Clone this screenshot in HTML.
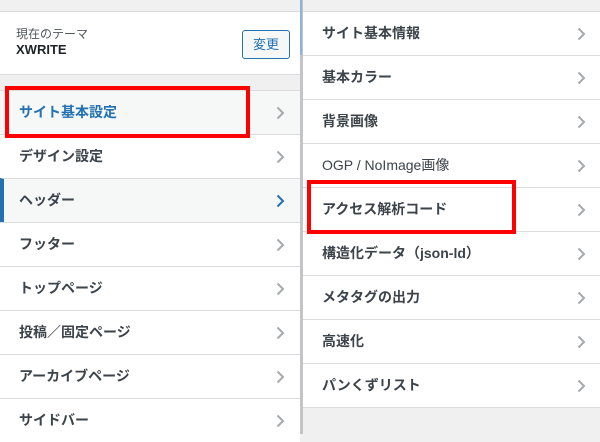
<!DOCTYPE html>
<html><head><meta charset="utf-8"><style>
*{margin:0;padding:0;box-sizing:border-box}
body{width:600px;height:434px;overflow:hidden;background:#f0f0f1;position:relative;font-family:"Liberation Sans","Noto Sans CJK JP",sans-serif;color:#3c434a}
.p{position:absolute;top:0;height:434px;background:#f0f0f1}
.item{position:absolute;height:44px;background:#fff;border-top:1px solid #dcdcde;font-size:14px;font-weight:bold;line-height:43px}
.item svg{position:absolute;top:15px}
.red{position:absolute;border:4px solid #f00}
</style></head><body>
<div class="p" style="left:0;width:300px">
 <div style="position:absolute;top:11px;left:0;width:300px;height:64px;background:#fff;border-top:1px solid #dcdcde;border-bottom:1px solid #dcdcde">
  <div style="position:absolute;left:16px;top:13px;font-size:12px;font-weight:normal;color:#50575e">現在のテーマ</div>
  <div style="position:absolute;left:16px;top:30px;font-size:13px;font-weight:bold;color:#1d2327">XWRITE</div>
  <div style="position:absolute;left:242px;top:18px;width:48px;height:29px;border:1px solid #2271b1;border-radius:3px;background:#f6f7f7;color:#2271b1;font-size:13px;text-align:center;line-height:27px">変更</div>
 </div>
</div>
<div style="position:absolute;left:300px;top:0;width:3px;height:434px;background:#c3c4c7"></div>
<div style="position:absolute;left:300px;top:0;width:2px;height:55px;background:#8ab4d9"></div>
<div id="L"></div><div id="R"></div>
<script>
var L=["サイト基本設定","デザイン設定","ヘッダー","フッター","トップページ","投稿／固定ページ","アーカイブページ","サイドバー"];
var h="";
L.forEach(function(t,i){var top=90+i*44;var act=i==2,hi=i==0;
var bg=(act||hi)?"#f6f7f7":"#fff";var c=hi?"#2271b1":"#3c434a";
var ch=act?"#2271b1":"#a7aaad";
h+='<div class="item" style="left:0;width:300px;top:'+top+'px;background:'+bg+';color:'+c+';padding-left:19px;'+(act?'border-left:4px solid #2271b1;padding-left:15px;':'')+'">'+t+'<svg style="left:'+(act?272:276)+'px" width="9" height="14" viewBox="0 0 9 14"><path d="M1.5 1.5L7 7l-5.5 5.5" fill="none" stroke="'+ch+'" stroke-width="2"/></svg></div>';});
h+='<div class="red" style="left:5px;top:86px;width:245px;height:52px"></div>';
document.getElementById("L").innerHTML=h;
var R=["サイト基本情報","基本カラー","背景画像","OGP / NoImage画像","アクセス解析コード","構造化データ（json-ld）","メタタグの出力","高速化","パンくずリスト"];
h="";
R.forEach(function(t,i){var top=11+i*44;
h+='<div class="item" style="left:303px;width:297px;top:'+top+'px;padding-left:19px;'+(i==8?'border-bottom:1px solid #dcdcde;height:45px;':'')+(i==3?'font-weight:normal;':'')+'">'+t+'<svg style="left:274px" width="9" height="14" viewBox="0 0 9 14"><path d="M1.5 1.5L7 7l-5.5 5.5" fill="none" stroke="#a7aaad" stroke-width="2"/></svg></div>';});
h+='<div class="red" style="left:307px;top:180px;width:209px;height:54px"></div>';
document.getElementById("R").innerHTML=h;
</script>
</body></html>
